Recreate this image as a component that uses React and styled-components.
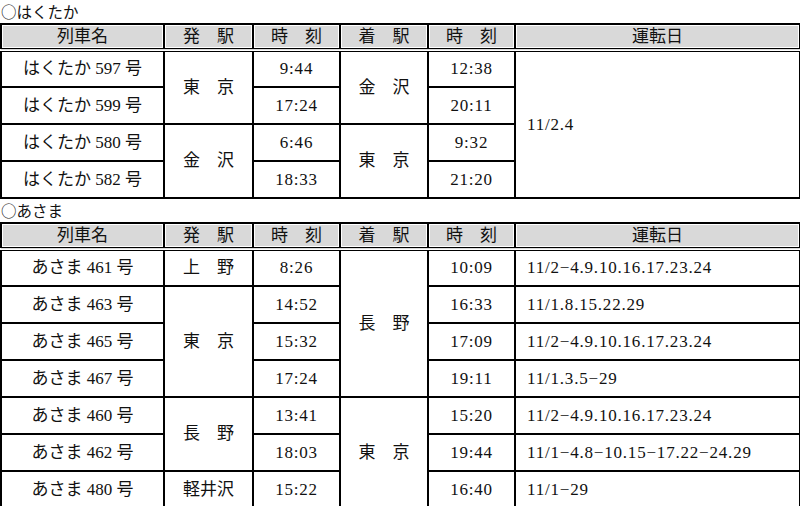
import React from "react";
import styled, { createGlobalStyle } from "styled-components";

const Global = createGlobalStyle`
  html, body { margin: 0; padding: 0; background: #fff; }
  body { width: 800px; height: 506px; overflow: hidden; }
`;

const Page = styled.div`
  display: flex;
  flex-direction: column;
  width: 800px;
  font-family: "Liberation Serif", "Noto Sans CJK JP", serif;
  color: #111;
`;

const Heading = styled.div`
  height: 23px;
  line-height: 23px;
  font-family: "Noto Sans CJK JP", sans-serif;
  font-size: 15.5px;
  padding-left: 1px;
  white-space: nowrap;
`;

const Table = styled.table`
  width: 799px;
  border-collapse: collapse;
  table-layout: fixed;
  border: 2px solid #000;
`;

const HeadRow = styled.tr`
  height: 26px;
`;

const Row = styled.tr`
  height: 37px;
`;

const Th = styled.th`
  padding: 0;
  font-weight: normal;
  font-size: 17px;
  line-height: 18px;
  text-align: center;
  background: #d9d9d9;
  box-shadow: inset 0 0 0 1px #fff;
  border-top: 2px solid #000;
  border-left: 2px solid #000;
  border-right: 2px solid #000;
  border-bottom: 4px double #000;
  white-space: nowrap;
`;

const Td = styled.td`
  padding: 0 0 0 ${(p) => (p.$left ? "11px" : "0")};
  font-size: 17px;
  line-height: 20px;
  text-align: ${(p) => (p.$left ? "left" : "center")};
  letter-spacing: ${(p) => (p.$num ? "0.8px" : "0")};
  border: 2px solid #000;
  white-space: nowrap;
  vertical-align: middle;
`;

const widths = [163, 89, 87, 88, 87, 285];

const headers = ["列車名", "発　駅", "時　刻", "着　駅", "時　刻", "運転日"];

const hakutaka = [
  [
    { t: "はくたか 597 号" },
    { t: "東　京", rs: 2 },
    { t: "9:44", num: true },
    { t: "金　沢", rs: 2 },
    { t: "12:38", num: true },
    { t: "11/2.4", rs: 4, left: true, num: true },
  ],
  [{ t: "はくたか 599 号" }, { t: "17:24", num: true }, { t: "20:11", num: true }],
  [
    { t: "はくたか 580 号" },
    { t: "金　沢", rs: 2 },
    { t: "6:46", num: true },
    { t: "東　京", rs: 2 },
    { t: "9:32", num: true },
  ],
  [{ t: "はくたか 582 号" }, { t: "18:33", num: true }, { t: "21:20", num: true }],
];

const asama = [
  [
    { t: "あさま 461 号" },
    { t: "上　野" },
    { t: "8:26", num: true },
    { t: "長　野", rs: 4 },
    { t: "10:09", num: true },
    { t: "11/2−4.9.10.16.17.23.24", left: true, num: true },
  ],
  [
    { t: "あさま 463 号" },
    { t: "東　京", rs: 3 },
    { t: "14:52", num: true },
    { t: "16:33", num: true },
    { t: "11/1.8.15.22.29", left: true, num: true },
  ],
  [
    { t: "あさま 465 号" },
    { t: "15:32", num: true },
    { t: "17:09", num: true },
    { t: "11/2−4.9.10.16.17.23.24", left: true, num: true },
  ],
  [
    { t: "あさま 467 号" },
    { t: "17:24", num: true },
    { t: "19:11", num: true },
    { t: "11/1.3.5−29", left: true, num: true },
  ],
  [
    { t: "あさま 460 号" },
    { t: "長　野", rs: 2 },
    { t: "13:41", num: true },
    { t: "東　京", rs: 3 },
    { t: "15:20", num: true },
    { t: "11/2−4.9.10.16.17.23.24", left: true, num: true },
  ],
  [
    { t: "あさま 462 号" },
    { t: "18:03", num: true },
    { t: "19:44", num: true },
    { t: "11/1−4.8−10.15−17.22−24.29", left: true, num: true },
  ],
  [
    { t: "あさま 480 号" },
    { t: "軽井沢" },
    { t: "15:22", num: true },
    { t: "16:40", num: true },
    { t: "11/1−29", left: true, num: true },
  ],
];

function Timetable({ rows }) {
  return (
    <Table>
      <colgroup>
        {widths.map((w, i) => (
          <col key={i} style={{ width: w }} />
        ))}
      </colgroup>
      <thead>
        <HeadRow>
          {headers.map((h, i) => (
            <Th key={i}>{h}</Th>
          ))}
        </HeadRow>
      </thead>
      <tbody>
        {rows.map((r, i) => (
          <Row key={i}>
            {r.map((c, j) => (
              <Td key={j} rowSpan={c.rs || 1} $left={c.left} $num={c.num}>
                {c.t}
              </Td>
            ))}
          </Row>
        ))}
      </tbody>
    </Table>
  );
}

export default function App() {
  return (
    <>
      <Global />
      <Page>
        <Heading>○はくたか</Heading>
        <Timetable rows={hakutaka} />
        <Heading>○あさま</Heading>
        <Timetable rows={asama} />
      </Page>
    </>
  );
}
